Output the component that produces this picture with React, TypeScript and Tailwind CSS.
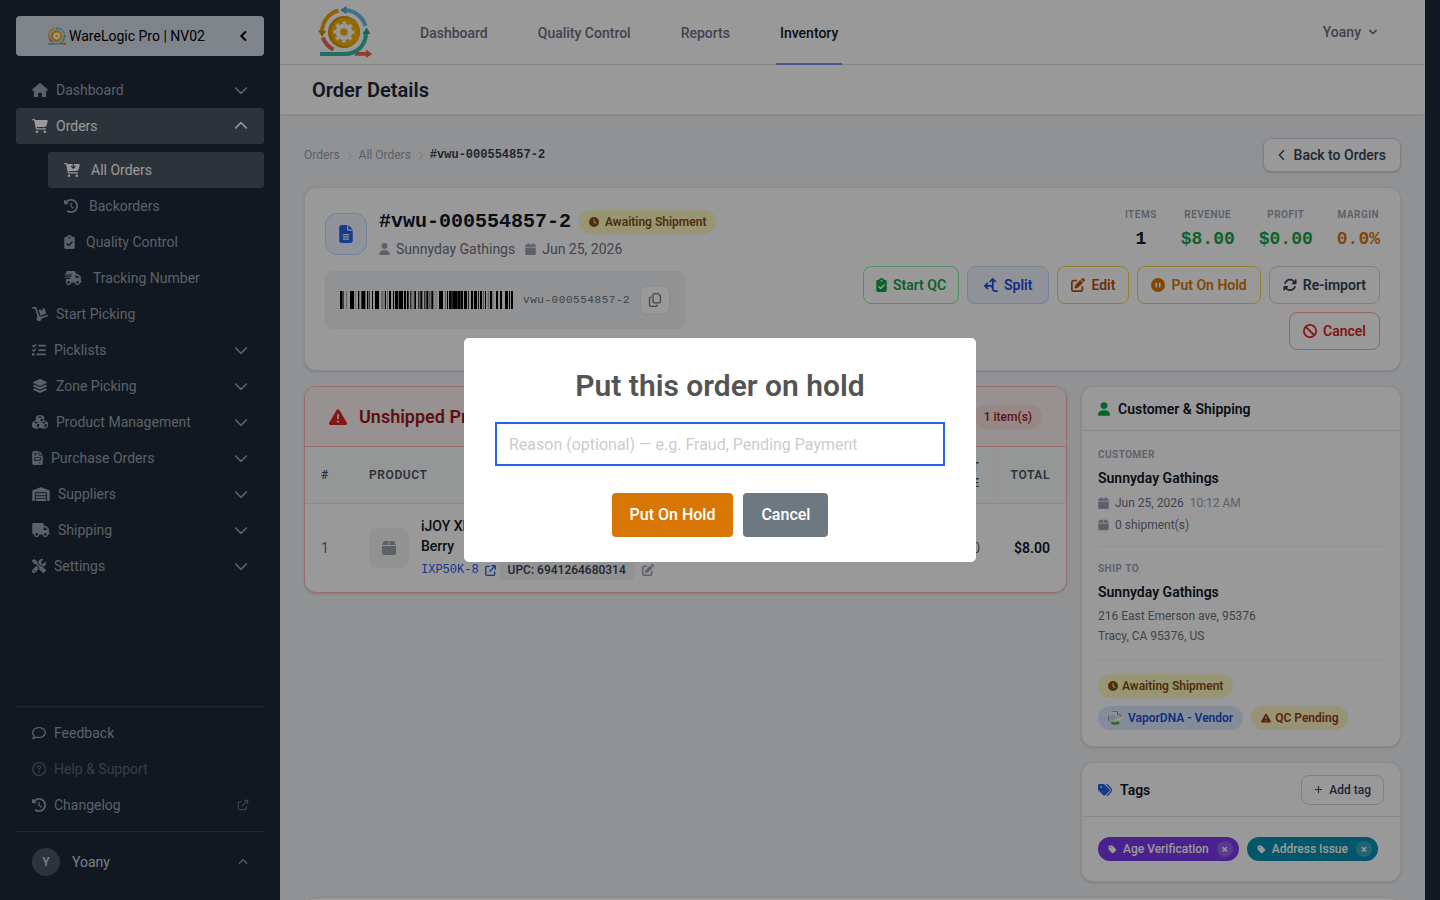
import React from 'react';
import { IconType } from 'react-icons';
import {
  FaArrowsRotate,
  FaArrowsSplitUpAndLeft,
  FaArrowUpRightFromSquare,
  FaBan,
  FaBox,
  FaCalendar,
  FaCartArrowDown,
  FaCartShopping,
  FaCirclePause,
  FaClipboardCheck,
  FaClock,
  FaClockRotateLeft,
  FaCubes,
  FaDolly,
  FaFileInvoice,
  FaFileLines,
  FaHouse,
  FaLayerGroup,
  FaListCheck,
  FaPenToSquare,
  FaPlus,
  FaRegCircleQuestion,
  FaRegComment,
  FaRegCopy,
  FaScrewdriverWrench,
  FaTag,
  FaTags,
  FaTriangleExclamation,
  FaTruck,
  FaTruckFast,
  FaUser,
  FaWarehouse,
} from 'react-icons/fa6';

const MONO = "font-['Liberation_Mono',monospace]";

const CHEVRONS = {
  down: 'M19 9l-7 7-7-7',
  up: 'M5 15l7-7 7 7',
  left: 'M15 19l-7-7 7-7',
  right: 'M9 5l7 7-7 7',
};

interface ChevronProps {
  dir: keyof typeof CHEVRONS;
  className: string;
  stroke?: number;
}

const Chevron = ({ dir, className, stroke = 2 }: ChevronProps) => (
  <svg className={className} viewBox="0 0 24 24" fill="none" stroke="currentColor" strokeWidth={stroke}>
    <path d={CHEVRONS[dir]} />
  </svg>
);

const Logo = ({ className, viewBox = '0 0 64 64' }: { className: string; viewBox?: string }) => (
  <svg className={className} viewBox={viewBox} fill="none">
    <path d="M26.500 10.500A22.500 22.500 0 0 0 10 31" stroke="#eaa60a" strokeWidth="4" />
    <path d="M6 30l8 1-4 6z" fill="#d38f04" />
    <path d="M33 10A22.500 22.500 0 0 1 53.500 26" stroke="#6cbbe6" strokeWidth="4" />
    <path d="M28 10l6.500-4.200v8.400z" fill="#57a9d8" />
    <path d="M10.800 37.500A22 22 0 0 0 21.500 49.500" stroke="#ee6455" strokeWidth="4" />
    <path d="M8 54h25c12 0 21-9 21-21" stroke="#35bea5" strokeWidth="4" />
    <path d="M54.500 27.500l4 6.500h-8z" fill="#2aa893" />
    <path d="M45 52h9v-2.500l6.200 4.500-6.200 4v-2.200H42z" fill="#ee6455" />
    <circle cx="32" cy="32" r="16" fill="#d69403" />
    <circle cx="33.500" cy="32" r="14.300" fill="#f5b30a" />
    <circle cx="32" cy="32" r="6" stroke="#fff" strokeWidth="4.500" />
    <circle cx="32" cy="32" r="9" stroke="#fff" strokeWidth="3" strokeDasharray="3.534 3.534" strokeDashoffset="1.767" />
  </svg>
);

interface NavItem {
  label: string;
  icon: IconType;
  width: string;
  plain?: boolean;
}

const mainNav: NavItem[] = [
  { label: 'Start Picking', icon: FaDolly, width: 'w-4', plain: true },
  { label: 'Picklists', icon: FaListCheck, width: 'w-3.5' },
  { label: 'Zone Picking', icon: FaLayerGroup, width: 'w-4' },
  { label: 'Product Management', icon: FaCubes, width: 'w-4' },
  { label: 'Purchase Orders', icon: FaFileInvoice, width: 'w-[11px]' },
  { label: 'Suppliers', icon: FaWarehouse, width: 'w-[18px]' },
  { label: 'Shipping', icon: FaTruck, width: 'w-[18px]' },
  { label: 'Settings', icon: FaScrewdriverWrench, width: 'w-3.5' },
];

const orderNav: NavItem[] = [
  { label: 'All Orders', icon: FaCartArrowDown, width: 'w-4' },
  { label: 'Backorders', icon: FaClockRotateLeft, width: 'w-3.5' },
  { label: 'Quality Control', icon: FaClipboardCheck, width: 'w-[11px]' },
  { label: 'Tracking Number', icon: FaTruckFast, width: 'w-[18px]' },
];

const NavButton = ({ item, active }: { item: NavItem; active?: boolean }) => (
  <button
    className={`flex h-9 w-full items-center gap-2 rounded px-4 text-left ${
      active ? 'bg-[#4b5563] text-white' : 'text-gray-400'
    }`}
  >
    <item.icon className={`h-3.5 shrink-0 ${item.width}`} />
    <span className="flex-1">{item.label}</span>
    {!item.plain && <Chevron dir={active ? 'up' : 'down'} className="-mr-[3px] size-5" />}
  </button>
);

const Sidebar = () => (
  <aside className="flex w-[280px] shrink-0 flex-col bg-[#1f2937] px-4 pt-4 text-sm">
    <button className="flex h-10 shrink-0 items-center rounded bg-[#d2dce7] pr-3 text-black">
      <span className="flex flex-1 items-center justify-center gap-0.5">
        <Logo className="size-5" viewBox="5 4 56 56" />
        WareLogic Pro | NV02
      </span>
      <Chevron dir="left" className="size-4" stroke={3} />
    </button>

    <nav className="mt-4 flex-1">
      <NavButton item={{ label: 'Dashboard', icon: FaHouse, width: 'w-4' }} />
      <NavButton item={{ label: 'Orders', icon: FaCartShopping, width: 'w-4' }} active />
      <div className="pt-2 pl-8">
        {orderNav.map((item, i) => (
          <a
            key={item.label}
            href="#"
            className={`flex h-9 items-center gap-[11px] rounded px-4 ${
              i === 0 ? 'bg-[#4b5563] text-white' : 'text-gray-400'
            }`}
          >
            <item.icon className={`h-3.5 shrink-0 ${item.width}`} />
            {item.label}
          </a>
        ))}
      </div>
      {mainNav.map((item) => (
        <NavButton key={item.label} item={item} />
      ))}
    </nav>

    <div className="border-t border-gray-700 py-2 text-gray-400">
      <a href="#" className="flex h-9 items-center gap-2 px-4">
        <FaRegComment className="size-3.5" />
        Feedback
      </a>
      <a href="#" className="flex h-9 items-center gap-2 px-4 opacity-50">
        <FaRegCircleQuestion className="size-3.5" />
        Help &amp; Support
      </a>
      <a href="#" className="flex h-9 items-center gap-2 px-4">
        <FaClockRotateLeft className="size-3.5" />
        <span className="flex-1">Changelog</span>
        <svg className="-mr-0.5 size-3.5 text-gray-500" viewBox="0 0 24 24" fill="none" stroke="currentColor" strokeWidth={2}>
          <path d="M10 6H6a2 2 0 00-2 2v10a2 2 0 002 2h10a2 2 0 002-2v-4M14 4h6m0 0v6m0-6L10 14" />
        </svg>
      </a>
    </div>
    <button className="flex items-center gap-3 border-t border-gray-700 px-4 pt-4 pb-6 text-left text-gray-300">
      <span className="flex size-7 items-center justify-center rounded-full bg-[#4b5563] text-xs font-semibold">Y</span>
      <span className="flex-1">Yoany</span>
      <Chevron dir="up" className="-mr-0.5 size-3.5 text-gray-400" />
    </button>
  </aside>
);

const TopBar = () => (
  <header className="flex h-[65px] items-stretch border-b border-gray-200 bg-white px-8 text-sm font-medium text-gray-500">
    <Logo className="size-16" />
    <nav className="ml-10 flex flex-1 gap-[42px]">
      {['Dashboard', 'Quality Control', 'Reports'].map((label) => (
        <a key={label} href="#" className="flex items-center px-1 pt-0.5">{label}</a>
      ))}
      <a href="#" className="-mb-px flex items-center border-b-2 border-[#818cf8] px-1 pt-0.5 text-gray-900">Inventory</a>
    </nav>
    <button className="flex items-center gap-1 px-3">
      Yoany
      <svg className="size-4" viewBox="0 0 20 20" fill="currentColor">
        <path d="M5.293 7.293a1 1 0 011.414 0L10 10.586l3.293-3.293a1 1 0 111.414 1.414l-4 4a1 1 0 01-1.414 0l-4-4a1 1 0 010-1.414z" />
      </svg>
    </button>
  </header>
);

// [x, width, opacity] on a 519 unit wide strip
const bars: [number, number, number][] = [
  [0, 6, 1], [7, 4, 0.9], [18, 3, 0.3], [30, 12, 1], [46, 2, 0.4], [54, 3, 1], [58, 2, 0.4], [64, 12, 1],
  [81, 3, 1], [86, 3, 0.9], [96, 3, 1], [105, 12, 1], [123, 2, 0.4], [127, 2, 0.4], [131, 2, 0.5], [135, 3, 1],
  [142, 2, 0.5], [147, 6, 1], [159, 3, 1], [165, 9, 1], [176, 13, 1], [192, 6, 1], [201, 5, 1], [211, 3, 1],
  [218, 2, 0.5], [223, 5, 1], [235, 3, 1], [241, 6, 1], [253, 3, 1], [259, 6, 1], [268, 3, 0.6], [274, 6, 1],
  [287, 2, 0.4], [297, 12, 1], [315, 2, 0.7], [321, 3, 1], [327, 8, 1], [335, 2, 0.8], [337, 14, 1], [351, 2, 0.8],
  [353, 7, 1], [360, 2, 0.8], [362, 7, 1], [372, 9, 1], [384, 3, 0.8], [393, 6, 1], [402, 9, 1], [414, 3, 0.8],
  [420, 6, 1], [430, 2, 0.7], [435, 3, 1], [443, 5, 0.3], [450, 6, 1], [458, 2, 0.4], [468, 6, 1], [480, 6, 1],
  [495, 9, 1], [507, 3, 1], [513, 6, 1],
];

const Metric = ({ label, value, color }: { label: string; value: string; color: string }) => (
  <div className="text-center">
    <div className="text-[10px] leading-[14px] font-semibold tracking-wider text-gray-400 uppercase">{label}</div>
    <div className={`mt-0.5 text-lg leading-[30px] font-bold ${MONO} ${color}`}>{value}</div>
  </div>
);

const actions = [
  { label: 'Start QC', icon: FaClipboardCheck, size: 'w-[11px]', style: 'px-3 border-[#86efac] text-[#16a34a]' },
  { label: 'Split', icon: FaArrowsSplitUpAndLeft, size: 'w-3.5', style: 'px-4 border-[#bfdbfe] bg-[#eff6ff] text-[#1d4ed8]' },
  { label: 'Edit', icon: FaPenToSquare, size: 'w-3.5', style: 'px-[13px] border-[#fcd34d] text-[#b45309]' },
  { label: 'Put On Hold', icon: FaCirclePause, size: 'w-3.5', style: 'px-[13px] border-[#fcd34d] text-[#d97706]' },
  { label: 'Re-import', icon: FaArrowsRotate, size: 'w-3.5', style: 'px-[13px] border-gray-300 text-gray-700' },
  { label: 'Cancel', icon: FaBan, size: 'w-3.5', style: 'px-[13px] border-[#fca5a5] text-[#dc2626]' },
];

const StatusBadge = ({ children, className }: { children: React.ReactNode; className: string }) => (
  <span className={`inline-flex h-6 items-center gap-1 rounded-full px-2.5 text-xs font-semibold ${className}`}>
    {children}
  </span>
);

const OrderHeader = () => (
  <section className="flex items-start justify-between rounded-xl border border-gray-200 bg-white p-5 shadow-sm">
    <div>
      <div className="flex items-center gap-3">
        <div className="flex size-[42px] items-center justify-center rounded-xl border border-[#bfdbfe] bg-[#eff6ff]">
          <FaFileLines className="h-[18px] w-3.5 text-[#2563eb]" />
        </div>
        <div>
          <div className="flex items-center gap-2">
            <h2 className={`text-xl leading-7 font-bold text-gray-900 ${MONO}`}>#vwu-000554857-2</h2>
            <StatusBadge className="bg-[#fef9c3] text-[#854d0e]">
              <FaClock className="mr-0.5 size-2.5" />
              Awaiting Shipment
            </StatusBadge>
          </div>
          <div className="mt-[3px] flex items-center text-sm text-gray-500">
            <FaUser className="mr-1.5 h-3 w-[11px] text-gray-400" />
            Sunnyday Gathings
            <FaCalendar className="mr-1.5 ml-2.5 h-3 w-[11px] text-gray-400" />
            Jun 25, 2026
          </div>
        </div>
      </div>
      <div className="mt-3 inline-flex items-center gap-2.5 rounded-lg border border-[#eceef1] bg-[#f1f3f6] px-3.5 py-[13px]">
        <svg className="h-[18px] w-[173px]" viewBox="0 0 519 54" preserveAspectRatio="none" role="img" aria-label="Order barcode">
          {bars.map(([x, w, o]) => (
            <rect key={x} x={x} width={w} height="54" opacity={o} />
          ))}
        </svg>
        <span className={`text-[11px] tracking-wider text-gray-500 ${MONO}`}>vwu-000554857-2</span>
        <button aria-label="Copy order number" className="flex size-[30px] items-center justify-center rounded-lg border border-gray-200 bg-white text-gray-500">
          <FaRegCopy className="size-3.5" />
        </button>
      </div>
    </div>
    <div className="max-w-[560px]">
      <div className="flex justify-end gap-6">
        <Metric label="Items" value="1" color="text-gray-900" />
        <Metric label="Revenue" value="$8.00" color="text-[#16a34a]" />
        <Metric label="Profit" value="$0.00" color="text-[#16a34a]" />
        <Metric label="Margin" value="0.0%" color="text-[#d97706]" />
      </div>
      <div className="mt-3 flex flex-wrap justify-end gap-2">
        {actions.map((a) => (
          <button key={a.label} className={`flex items-center gap-1.5 rounded-lg border py-2 text-sm leading-5 font-semibold ${a.style}`}>
            <a.icon className={`h-3.5 ${a.size}`} />
            {a.label}
          </button>
        ))}
      </div>
    </div>
  </section>
);

const ProductTable = () => (
  <section className="min-w-0 flex-1 self-start overflow-hidden rounded-xl border border-[#fcb5b5] bg-white shadow-sm">
    <div className="flex h-[60px] items-center border-b border-[#fcb5b5] bg-[#fef2f2] px-6">
      <FaTriangleExclamation className="size-[18px] text-[#dc2626]" />
      <h3 className="ml-3 flex-1 text-lg font-semibold text-[#991b1b]">Unshipped Products</h3>
      <span className="flex h-6 items-center rounded-full bg-[#fee2e2] px-2.5 text-xs font-medium text-[#991b1b]">1 item(s)</span>
    </div>
    <table className="w-full text-sm">
      <thead className="border-b border-gray-200 bg-gray-50 text-xs tracking-wider text-gray-600 uppercase">
        <tr>
          <th className="w-12 px-4 py-3 text-left font-semibold">#</th>
          <th className="px-4 py-3 text-left font-semibold">Product</th>
          <th className="w-24 px-4 py-3 text-center font-semibold">Qty</th>
          <th className="w-24 border-r border-gray-100 py-3 pr-3.5 pl-4 text-right font-semibold">Unit<br />Price</th>
          <th className="w-[71px] px-4 py-3 text-right font-semibold">Total</th>
        </tr>
      </thead>
      <tbody>
        <tr>
          <td className="px-4 py-3 text-gray-500">1</td>
          <td className="px-4 py-3">
            <div className="flex items-center gap-3">
              <div className="flex size-10 shrink-0 items-center justify-center rounded-lg bg-gray-100 text-gray-400">
                <FaBox className="size-4" />
              </div>
              <div>
                <div className="font-medium text-gray-900">iJOY XP50K Disposable<br />Berry</div>
                <div className="mt-1 flex h-5 items-center text-xs">
                  <a href="#" className={`flex items-center gap-1.5 text-[#2563eb] ${MONO}`}>
                    IXP50K-8
                    <FaArrowUpRightFromSquare className="size-[11px]" />
                  </a>
                  <span className="ml-1 rounded bg-gray-100 px-2 py-0.5 font-medium text-gray-700">UPC: 6941264680314</span>
                  <button aria-label="Edit UPC" className="ml-2 text-gray-400">
                    <FaPenToSquare className="size-3" />
                  </button>
                </div>
              </div>
            </div>
          </td>
          <td className="px-4 py-3 text-center text-gray-500">1</td>
          <td className="py-3 pr-3.5 pl-4 text-right text-gray-500">$8.00</td>
          <td className="px-4 py-3 text-right font-semibold text-gray-900">$8.00</td>
        </tr>
      </tbody>
    </table>
  </section>
);

const SectionLabel = ({ children }: { children: React.ReactNode }) => (
  <div className="text-[10px] leading-[15px] font-semibold tracking-wider text-gray-400 uppercase">{children}</div>
);

const CustomerCard = () => (
  <section className="rounded-xl border border-gray-200 bg-white shadow-sm">
    <h3 className="flex h-11 items-center gap-2 border-b border-gray-200 px-4 text-sm font-semibold text-gray-900">
      <FaUser className="h-3.5 w-3 text-[#16a34a]" />
      Customer &amp; Shipping
    </h3>
    <div className="p-4 text-xs text-gray-500">
      <SectionLabel>Customer</SectionLabel>
      <div className="mt-1 text-sm leading-6 font-semibold text-gray-900">Sunnyday Gathings</div>
      <div className="mt-1 flex items-center gap-1.5 leading-[18px]">
        <FaCalendar className="h-3 w-[11px] text-gray-400" />
        Jun 25, 2026
        <span className="text-gray-400">10:12 AM</span>
      </div>
      <div className="mt-1 flex items-center gap-1.5 leading-[18px]">
        <FaBox className="h-3 w-[11px] text-gray-400" />
        0 shipment(s)
      </div>
      <div className="mt-3 border-t border-gray-100 pt-3.5">
        <SectionLabel>Ship to</SectionLabel>
        <div className="mt-1 text-sm leading-6 font-semibold text-gray-900">Sunnyday Gathings</div>
        <div className="mt-0.5 leading-5">
          216 East Emerson ave, 95376
          <br />
          Tracy, CA 95376, US
        </div>
      </div>
      <div className="mt-[13px] flex flex-wrap gap-2 border-t border-gray-100 pt-3.5">
        <StatusBadge className="bg-[#fef9c3] text-[#854d0e]">
          <FaClock className="size-2.5" />
          Awaiting Shipment
        </StatusBadge>
        <StatusBadge className="bg-[#dbeafe] text-[#1d4ed8]">
          <svg className="mr-0.5 size-3.5 rounded-full" viewBox="0 0 14 14">
            <rect width="14" height="14" fill="#dbe4f3" />
            <path d="M.5 4.500V2C.5 1 1.200.5 2 .5h7.500V4H13v2" fill="#eef3fb" stroke="#8b9099" />
            <path d="M0 12V6c2-2 3-2.500 5-2 2 .5 2.500 1.500 5 1.500L4 10z" fill="#c9d9ef" />
            <path d="M.5 5v6" stroke="#8b9099" />
            <path d="M2 14c1-3 3-4.500 5.500-4.500 2 0 3.500 1 4.500 2.500v2z" fill="#5fb53a" />
            <path d="M4 10.500L14 6v2L7 11z" fill="#fff" />
          </svg>
          VaporDNA - Vendor
        </StatusBadge>
        <StatusBadge className="bg-[#fef3c7] text-[#92400e]">
          <FaTriangleExclamation className="size-2.5" />
          QC Pending
        </StatusBadge>
      </div>
    </div>
  </section>
);

const Tag = ({ label, color }: { label: string; color: string }) => (
  <span className={`flex h-6 items-center rounded-full pr-1.5 pl-2.5 text-xs font-medium text-white ${color}`}>
    <FaTag className="mr-1.5 size-[9px]" />
    {label}
    <button aria-label={`Remove ${label}`} className="ml-2 flex size-4 items-center justify-center rounded-full bg-white/20 text-[11px] leading-none font-bold">
      ×
    </button>
  </span>
);

const TagsCard = () => (
  <section className="rounded-xl border border-gray-200 bg-white shadow-sm">
    <div className="flex h-[54px] items-center gap-2 border-b border-gray-200 px-4">
      <FaTags className="size-3.5 text-[#2563eb]" />
      <h3 className="flex-1 text-sm font-semibold text-gray-900">Tags</h3>
      <button className="flex h-[30px] items-center gap-1.5 rounded-lg border border-gray-300 px-3 text-xs font-medium text-gray-700">
        <FaPlus className="size-[9px]" />
        Add tag
      </button>
    </div>
    <div className="flex flex-wrap gap-2 px-4 py-5">
      <Tag label="Age Verification" color="bg-[#7c3aed]" />
      <Tag label="Address Issue" color="bg-[#0891b2]" />
    </div>
  </section>
);

const HoldDialog = () => (
  <div className="fixed inset-0 z-50 flex items-center justify-center bg-black/40">
    <form
      role="dialog"
      aria-labelledby="hold-title"
      className="flex w-lg flex-col items-center rounded-[5px] bg-white px-[31px] pt-7 pb-[25px]"
      onSubmit={(e) => e.preventDefault()}
    >
      <h2 id="hold-title" className="text-3xl leading-10 font-semibold text-[#545454]">Put this order on hold</h2>
      <input
        aria-label="Reason"
        placeholder="Reason (optional) — e.g. Fraud, Pending Payment"
        className="mt-4 h-11 w-full border-2 border-[#2563eb] px-3 text-base text-gray-700 outline-none placeholder:text-[#cccccc]"
      />
      <div className="mt-[27px] flex gap-2.5 text-base font-medium text-white">
        <button type="submit" className="h-11 rounded bg-[#d97706] px-[18px]">Put On Hold</button>
        <button type="button" className="h-11 rounded bg-[#6e7881] px-[18px]">Cancel</button>
      </div>
    </form>
  </div>
);

export default function App() {
  return (
    <div className="flex h-screen overflow-hidden bg-[#1f2937] pr-[15px] font-[Roboto,sans-serif]">
      <Sidebar />
      <main className="min-w-0 flex-1 bg-[#f1f3f6]">
        <TopBar />
        <div className="relative bg-white px-8 pt-[13px] pb-[11px] shadow">
          <h1 className="text-xl leading-[25px] font-semibold text-gray-800">Order Details</h1>
        </div>
        <div className="p-6">
          <div className="mb-[15px] flex items-center justify-between">
            <nav className="flex items-center gap-0.5 text-xs text-gray-400">
              <a href="#">Orders</a>
              <Chevron dir="right" className="size-[15px] p-px" stroke={1} />
              <a href="#">All Orders</a>
              <Chevron dir="right" className="size-[15px] p-px" stroke={1} />
              <span className={`font-bold text-gray-700 ${MONO}`}>#vwu-000554857-2</span>
            </nav>
            <button className="flex items-center gap-1 rounded-lg border border-gray-300 bg-white px-3.5 py-1.5 text-sm leading-5 font-medium text-gray-700 shadow-sm">
              <Chevron dir="left" className="-ml-1 size-4" />
              Back to Orders
            </button>
          </div>
          <OrderHeader />
          <div className="mt-[15px] flex gap-3.5">
            <ProductTable />
            <div className="flex w-80 shrink-0 flex-col gap-[15px]">
              <CustomerCard />
              <TagsCard />
            </div>
          </div>
          <section className="mt-[15px] h-40 rounded-xl border border-gray-200 bg-white shadow-sm" />
        </div>
      </main>
      <HoldDialog />
    </div>
  );
}
